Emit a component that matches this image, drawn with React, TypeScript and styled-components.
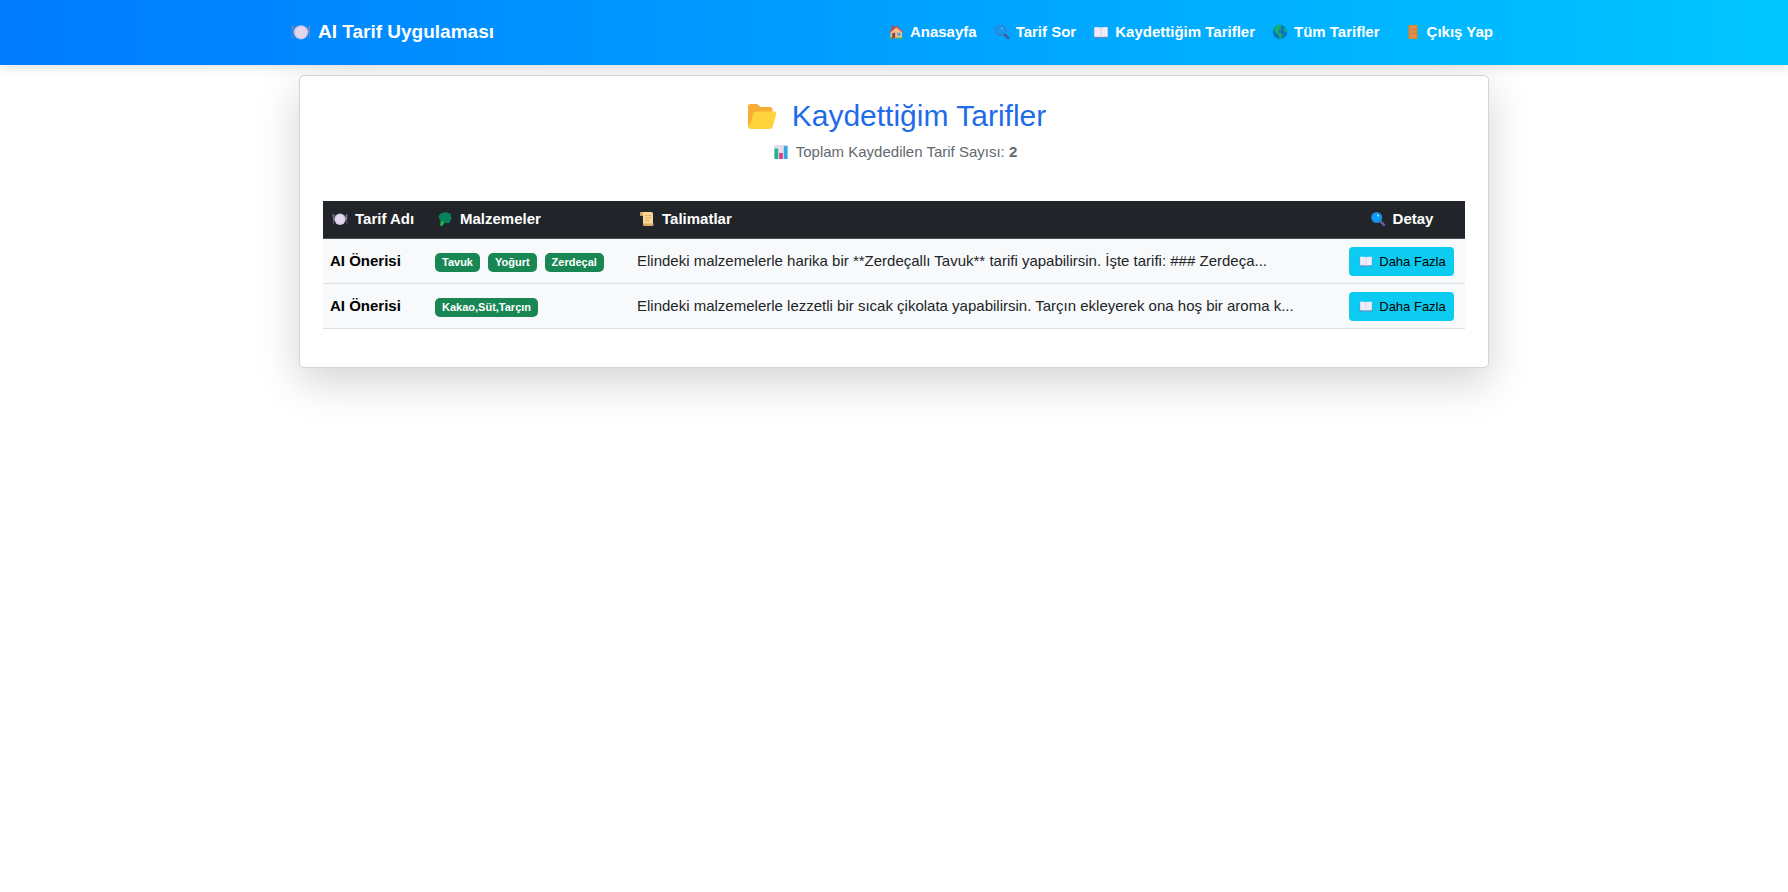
import React from "react";
import styled, { createGlobalStyle } from "styled-components";

const GlobalStyle = createGlobalStyle`
  *, *::before, *::after { box-sizing: border-box; }
  body {
    margin: 0;
    background: #fff;
    color: #212529;
    font-family: "Liberation Sans", Arial, sans-serif;
    font-size: 15px;
    line-height: 22px;
  }
`;

const Page = styled.div`
  min-height: 100vh;
  padding-bottom: 60px;
`;

const Icon = styled.svg<{ $size?: number }>`
  flex: none;
  width: ${(p) => p.$size ?? 16}px;
  height: ${(p) => p.$size ?? 16}px;
`;

const NavBar = styled.nav`
  position: relative;
  background: linear-gradient(90deg, #007bff, #00c6ff);
  box-shadow: 0 4px 9px rgba(0, 0, 0, 0.1);
`;

const NavInner = styled.div`
  display: flex;
  align-items: center;
  justify-content: space-between;
  max-width: 1206px;
  min-height: 65px;
  margin: 0 auto;
  padding: 0 4px 1px 0;
`;

const Brand = styled.a`
  display: flex;
  align-items: center;
  gap: 7px;
  color: #fff;
  font-size: 19px;
  font-weight: 700;
  text-decoration: none;
`;

const NavList = styled.ul`
  display: flex;
  gap: 17px;
  margin: 0;
  padding: 0;
  list-style: none;
`;

const NavItem = styled.li<{ $apart?: boolean }>`
  margin-left: ${(p) => (p.$apart ? 8 : 0)}px;
`;

const NavLink = styled.a`
  display: flex;
  align-items: center;
  gap: 6px;
  color: #fff;
  font-weight: 700;
  text-decoration: none;
`;

const Card = styled.main`
  max-width: 1190px;
  margin: 10px auto 0;
  padding: 22px 23px 38px;
  background: #fff;
  border: 1px solid #d3d4d5;
  border-radius: 5px;
  box-shadow: 0 14px 43px rgba(0, 0, 0, 0.175);
`;

const Title = styled.h1`
  display: flex;
  align-items: center;
  justify-content: center;
  gap: 16px;
  margin: 0 0 7px;
  color: #1f6be8;
  font-size: 30px;
  font-weight: 400;
  line-height: 36px;
`;

const Summary = styled.p`
  display: flex;
  align-items: center;
  justify-content: center;
  gap: 7px;
  margin: 0 0 38px;
  color: #63696e;
`;

const Table = styled.table`
  width: 100%;
  border-collapse: separate;
  border-spacing: 0;
  table-layout: fixed;
`;

const Col = styled.col<{ $width?: number }>`
  width: ${(p) => (p.$width ? `${p.$width}px` : "auto")};
`;

const HeadCell = styled.th<{ $center?: boolean }>`
  height: 38px;
  padding: 6px 9px 8px;
  background: #212529;
  border-bottom: 1px solid #4d5154;
  color: #fff;
  text-align: ${(p) => (p.$center ? "center" : "left")};
  white-space: nowrap;
`;

const HeadLabel = styled.span`
  display: inline-flex;
  align-items: center;
  gap: 7px;
  vertical-align: top;
`;

const Cell = styled.td<{ $center?: boolean }>`
  height: 45px;
  padding: 7px;
  background: #f8f9fa;
  border-bottom: 1px solid #dfe0e1;
  text-align: ${(p) => (p.$center ? "center" : "left")};
`;

const RecipeName = styled.strong`
  color: #000;
`;

const Badges = styled.div`
  display: flex;
  flex-wrap: wrap;
  gap: 8px;
  padding-top: 2px;
`;

const Badge = styled.span`
  padding: 4px 7px;
  background: #198754;
  border-radius: 5px;
  color: #fff;
  font-size: 11px;
  font-weight: 700;
  line-height: 11px;
`;

const DetailButton = styled.button`
  display: inline-flex;
  align-items: center;
  gap: 6px;
  height: 29px;
  padding: 0 8px 0 10px;
  background: #0dcaf0;
  border: 0;
  border-radius: 4px;
  color: #000;
  font-family: inherit;
  font-size: 13px;
  white-space: nowrap;
  vertical-align: top;
`;

type IconProps = { size?: number };

const PlateIcon = ({ size }: IconProps) => (
  <Icon $size={size} viewBox="0 0 16 16" aria-hidden="true">
    <path d="M1.4 3v4M.9 3v3M1.9 3v3M1.4 6v7.500" stroke="#8f83a8" strokeWidth=".6" fill="none" />
    <path d="M14.800 13.500V3q-1 1.500-1 5h1" stroke="#8f83a8" strokeWidth=".6" fill="#9a8fb0" />
    <circle cx="8" cy="8.200" r="5.700" fill="#d4c6e4" />
    <circle cx="8" cy="8.200" r="4.400" fill="#e2d8ee" />
  </Icon>
);

const HomeIcon = () => (
  <Icon viewBox="0 0 16 16" aria-hidden="true">
    <path d="M3.500 2H6v5H3.500z" fill="#a4534a" />
    <path d="M2.500 7.500 8.500 3 14 8v6.500H2.500z" fill="#f4bd8d" />
    <path d="M1 8 8.500 1.500 15.500 8l-.8.8-6.200-5.300L1.800 9z" fill="#d2504a" />
    <path d="M4.200 8.800h3v5.700h-3z" fill="#7b4b43" />
    <path d="M9.200 8.700h3.200v3H9.200z" fill="#4d9fd8" />
    <path d="M1 13h3v2H1zM8 13.500h7V15H8z" fill="#35b56b" />
  </Icon>
);

const SearchIcon = ({ clear }: { clear?: boolean }) => (
  <Icon viewBox="0 0 16 16" aria-hidden="true">
    <path d="m10.500 10.300 3.500 3.500" stroke={clear ? "#6a5ba0" : "#4a5496"} strokeWidth="2.600" strokeLinecap="round" />
    <circle cx="6.700" cy="6.500" r="5" fill={clear ? "#0b9df5" : "#1697f2"} stroke={clear ? "#2380d0" : "#3e78bd"} strokeWidth="1.200" />
    <circle cx="8" cy="4.500" r="1" fill={clear ? "#a8e6ff" : "#4db6f6"} />
  </Icon>
);

const BookIcon = ({ size }: IconProps) => (
  <Icon $size={size} viewBox="0 0 16 16" aria-hidden="true">
    <path d="M.8 5h14.400v9.200H.8z" fill="#5a8fc4" />
    <path d="M1.300 3.200q3.700-.3 6.700.2 3-.5 6.700-.2v9.600q-3.700-.2-6.700.3-3-.5-6.700-.3z" fill="#f0ebf8" />
    <path d="M8 3.400V13" stroke="#d6cae4" strokeWidth=".8" />
  </Icon>
);

const GlobeIcon = () => (
  <Icon viewBox="0 0 16 16" aria-hidden="true">
    <circle cx="8" cy="8" r="7.200" fill="#0b74bd" />
    <path d="M2 4Q4 .8 8 .8l2 1-1.500 2 1 1.500-2 .7-1 2.200 2.500 1 1.800 2-1.800 3.800-2-1-.8-3.500L3 8.500z" fill="#15ad70" />
    <path d="m12 3.500 2.500 2 .5 3-2-.5-1.300-2z" fill="#15ad70" />
  </Icon>
);

const DoorIcon = () => (
  <Icon viewBox="0 0 16 16" aria-hidden="true">
    <path d="M3.500 1h9v14h-9z" fill="#d68438" />
    <path d="M4.500 2h7v3h-7zM4.500 6h7v3h-7zM4.500 10.200h7V14h-7z" fill="#df8e42" />
    <path d="M4 5.500h8M4 9.600h8" stroke="#c27a40" strokeWidth=".5" />
  </Icon>
);

const FolderIcon = () => (
  <Icon $size={34} viewBox="-2 0 34 34" aria-hidden="true">
    <path d="M4 7.500Q4 5 6.500 5H12q1.500 0 2.500 1l2 2H26q2.500 0 2.500 2.500V28H4z" fill="#f9ad36" />
    <path d="M13 12.500h17.500q2.500 0 1.800 2.500l-3.500 12.500Q28.200 30 25.500 30H6.500Q4 30 4.200 27.500q3-4 4.500-11Q9.500 12.500 13 12.500z" fill="#fed33c" />
  </Icon>
);

const ChartIcon = () => (
  <Icon $size={18} viewBox="-2 -1 18 18" aria-hidden="true">
    <path d="M1 1h14v14H1z" fill="#e3dcea" />
    <path d="M1.500 4.500h3.700V15H1.500z" fill="#22b78a" />
    <path d="M6.200 9h3.600v6H6.200z" fill="#dc3b8c" />
    <path d="M10.800 2h3.700v13h-3.700z" fill="#31a8e0" />
  </Icon>
);

const LeafIcon = () => (
  <Icon viewBox="0 0 16 16" aria-hidden="true">
    <path d="m3 14.500 1-5.500 4 2-2.600 4z" fill="#16b84e" />
    <path d="M2 4.500Q3 1.500 6 2q3-2 5 0 3-.2 3 3 1.500 2.500-.5 4-.2 3.500-3 3.200-2.500 0-4-2L4.500 10Q2.500 10 2.500 8 .8 7 2 4.500z" fill="#078159" />
  </Icon>
);

const ScrollIcon = () => (
  <Icon viewBox="0 0 16 16" aria-hidden="true">
    <path d="M1 2.500Q1 1 2.500 1h10Q14 1 14 2.500V13H4V4.500H1z" fill="#f8d694" />
    <path d="M1 2.500Q1 1 2.500 1T4 2.500v2H1zM5 12.500h9.500q.5 2.500-1.500 2.500H5.500Q3.500 15 4 12.500z" fill="#e0aa66" />
    <path d="M6 4.500h6M6 7h6M6 9.500h4" stroke="#d9a566" strokeWidth=".8" />
  </Icon>
);

const navLinks = [
  { label: "Anasayfa", icon: <HomeIcon /> },
  { label: "Tarif Sor", icon: <SearchIcon /> },
  { label: "Kaydettiğim Tarifler", icon: <BookIcon /> },
  { label: "Tüm Tarifler", icon: <GlobeIcon /> },
  { label: "Çıkış Yap", icon: <DoorIcon />, apart: true },
];

const recipes = [
  {
    name: "AI Önerisi",
    ingredients: ["Tavuk", "Yoğurt", "Zerdeçal"],
    text: "Elindeki malzemelerle harika bir **Zerdeçallı Tavuk** tarifi yapabilirsin. İşte tarifi: ### Zerdeça...",
  },
  {
    name: "AI Önerisi",
    ingredients: ["Kakao,Süt,Tarçın"],
    text: "Elindeki malzemelerle lezzetli bir sıcak çikolata yapabilirsin. Tarçın ekleyerek ona hoş bir aroma k...",
  },
];

export default function App() {
  return (
    <Page>
      <GlobalStyle />
      <NavBar>
        <NavInner>
          <Brand href="#"><PlateIcon size={20} />AI Tarif Uygulaması</Brand>
          <NavList>
            {navLinks.map((link) => (
              <NavItem key={link.label} $apart={link.apart}>
                <NavLink href="#">{link.icon}{link.label}</NavLink>
              </NavItem>
            ))}
          </NavList>
        </NavInner>
      </NavBar>
      <Card>
        <Title><FolderIcon />Kaydettiğim Tarifler</Title>
        <Summary><ChartIcon /><span>Toplam Kaydedilen Tarif Sayısı: <strong>{recipes.length}</strong></span></Summary>
        <Table>
          <colgroup>
            <Col $width={105} />
            <Col $width={202} />
            <Col />
            <Col $width={127} />
          </colgroup>
          <thead>
            <tr>
              <HeadCell scope="col"><HeadLabel><PlateIcon />Tarif Adı</HeadLabel></HeadCell>
              <HeadCell scope="col"><HeadLabel><LeafIcon />Malzemeler</HeadLabel></HeadCell>
              <HeadCell scope="col"><HeadLabel><ScrollIcon />Talimatlar</HeadLabel></HeadCell>
              <HeadCell scope="col" $center><HeadLabel><SearchIcon clear />Detay</HeadLabel></HeadCell>
            </tr>
          </thead>
          <tbody>
            {recipes.map((recipe, i) => (
              <tr key={i}>
                <Cell><RecipeName>{recipe.name}</RecipeName></Cell>
                <Cell>
                  <Badges>
                    {recipe.ingredients.map((item) => <Badge key={item}>{item}</Badge>)}
                  </Badges>
                </Cell>
                <Cell>{recipe.text}</Cell>
                <Cell $center>
                  <DetailButton type="button"><BookIcon size={14} />Daha Fazla</DetailButton>
                </Cell>
              </tr>
            ))}
          </tbody>
        </Table>
      </Card>
    </Page>
  );
}
